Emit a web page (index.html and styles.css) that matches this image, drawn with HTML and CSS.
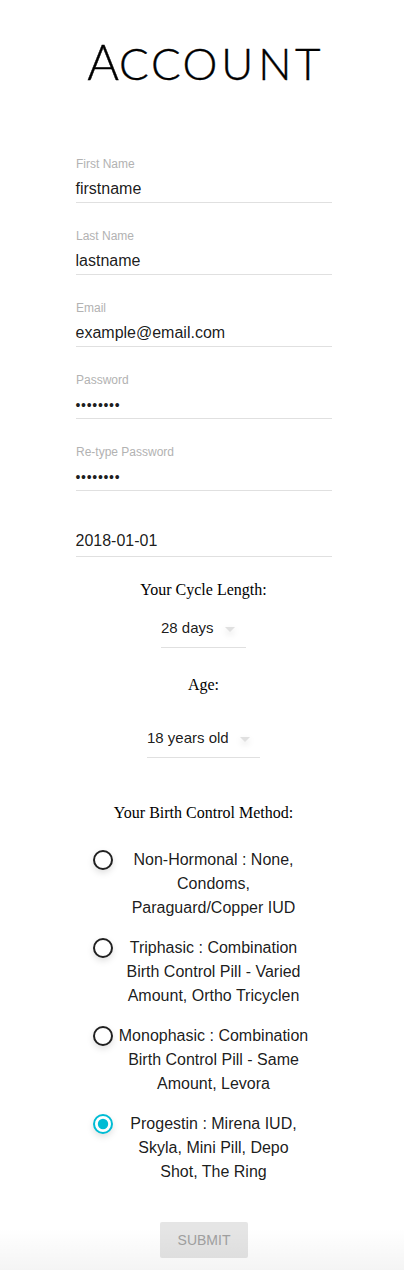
FILE: index.html
```html
<!DOCTYPE html>
<html lang="en">
<head>
<meta charset="utf-8">
<title>Account</title>
<link rel="stylesheet" href="styles.css">
</head>
<body>
<main class="page">
  <h1 class="title"><svg width="240" height="60" viewBox="0 0 240 60" aria-label="Account"><text class="title-initial" x="5.3" y="50">A</text><text class="title-caps" x="37 69 100.5 139.3 176.2 213" y="50">CCOUNT</text></svg></h1>
  <form class="form">
    <label class="field"><span class="label">First Name</span><span class="value">firstname</span></label>
    <label class="field"><span class="label">Last Name</span><span class="value">lastname</span></label>
    <label class="field"><span class="label">Email</span><span class="value">example@email.com</span></label>
    <label class="field"><span class="label">Password</span><span class="value masked">••••••••</span></label>
    <label class="field"><span class="label">Re-type Password</span><span class="value masked">••••••••</span></label>
    <div class="field date"><span class="value">2018-01-01</span></div>
    <p class="heading cycle-heading">Your Cycle Length:</p>
    <div class="select cycle"><span>28 days</span><svg class="arrow" width="10" height="5"><path d="M0 0h10L5 5z"/></svg></div>
    <p class="heading age-heading">Age:</p>
    <div class="select age"><span>18 years old</span><svg class="arrow" width="10" height="5"><path d="M0 0h10L5 5z"/></svg></div>
    <p class="heading method-heading">Your Birth Control Method:</p>
    <div class="options">
      <div class="option"><svg class="radio" width="20" height="20"><circle class="ring" cx="10" cy="10" r="9"/></svg><span class="option-text">Non-Hormonal : None,<br>Condoms,<br>Paraguard/Copper IUD</span></div>
      <div class="option"><svg class="radio" width="20" height="20"><circle class="ring" cx="10" cy="10" r="9"/></svg><span class="option-text">Triphasic : Combination<br>Birth Control Pill - Varied<br>Amount, Ortho Tricyclen</span></div>
      <div class="option"><svg class="radio" width="20" height="20"><circle class="ring" cx="10" cy="10" r="9"/></svg><span class="option-text">Monophasic : Combination<br>Birth Control Pill - Same<br>Amount, Levora</span></div>
      <div class="option selected"><svg class="radio" width="20" height="20"><circle class="ring" cx="10" cy="10" r="9"/><circle class="dot" cx="10" cy="10" r="5.2"/></svg><span class="option-text">Progestin : Mirena IUD,<br>Skyla, Mini Pill, Depo<br>Shot, The Ring</span></div>
    </div>
    <button class="submit" type="button" disabled>SUBMIT</button>
  </form>
  <div class="fade"></div>
</main>
</body>
</html>
```
FILE: styles.css
```css
* { box-sizing: border-box; }
body { margin: 0; background: #fff; }
.page {
  position: relative;
  width: 404px;
  height: 1270px;
  overflow: hidden;
  font-family: "Liberation Sans", Arial, sans-serif;
  color: rgba(0, 0, 0, 0.9);
}
.title { margin: 0; padding: 30px 0 0 82px; height: 131px; font-weight: 300; }
.title svg { display: block; }
.title text { font-family: Lato, sans-serif; font-weight: 300; fill: #000; stroke: #000; stroke-width: 0.4px; }
.title-initial { font-size: 48.5px; }
.title-caps { font-size: 44px; }
.form { display: flex; flex-direction: column; align-items: center; padding-left: 3px; }
.field {
  display: flex;
  flex-direction: column;
  justify-content: flex-end;
  width: 256px;
  height: 72px;
  margin-left: 1px;
  padding-bottom: 3px;
  border-bottom: 1px solid #e0e0e0;
}
.label { font-size: 12px; line-height: 14px; color: #b2b2b2; margin-bottom: 8px; }
.value { margin-left: -0.5px; font-size: 16px; line-height: 20px; color: rgba(0, 0, 0, 0.9); }
.masked { font-size: 14px; letter-spacing: 0.7px; }
.date { height: 66px; padding-bottom: 5px; }
.heading {
  margin: 0;
  font-family: "Liberation Serif", "Times New Roman", serif;
  font-size: 16px;
  line-height: 18px;
  color: #000;
}
.cycle-heading { margin-top: 24px; }
.age-heading { margin-top: 28px; }
.method-heading { margin-top: 46px; }
.select {
  display: flex;
  align-items: center;
  gap: 11px;
  height: 37px;
  padding-bottom: 3px;
  border-bottom: 1px solid #e0e0e0;
  font-size: 15px;
}
.cycle { width: 85px; margin-top: 12px; }
.age { width: 113px; margin-top: 27px; }
.arrow {
  flex: none;
  margin-top: 3px;
  overflow: visible;
  fill: #e0e0e0;
  filter: drop-shadow(0 3px 3px rgba(0, 0, 0, 0.12));
}
.options { display: flex; flex-direction: column; gap: 16px; width: 222px; margin: 26px 0 0 1px; }
.option { display: flex; align-items: flex-start; gap: 5px; }
.radio { flex: none; margin: 2px 0 0 0; overflow: visible; filter: drop-shadow(0 3px 3px rgba(0, 0, 0, 0.12)); }
.ring { fill: #fff; stroke: #212121; stroke-width: 2; }
.selected .ring { stroke: #00bcd4; }
.dot { fill: #00bcd4; }
.option-text { width: 191px; font-size: 16px; line-height: 24px; text-align: center; white-space: nowrap; }
.submit {
  width: 88px;
  height: 36px;
  margin: 38px 0 0 1px;
  padding: 0;
  border: 0;
  border-radius: 2px;
  background: #e5e5e5;
  color: #a0a0a0;
  font: 14px/36px "Liberation Sans", Arial, sans-serif;
}
.fade {
  position: absolute;
  left: 0;
  right: 0;
  bottom: 0;
  height: 42px;
  background: linear-gradient(rgba(0, 0, 0, 0), rgba(0, 0, 0, 0.045));
}
```
